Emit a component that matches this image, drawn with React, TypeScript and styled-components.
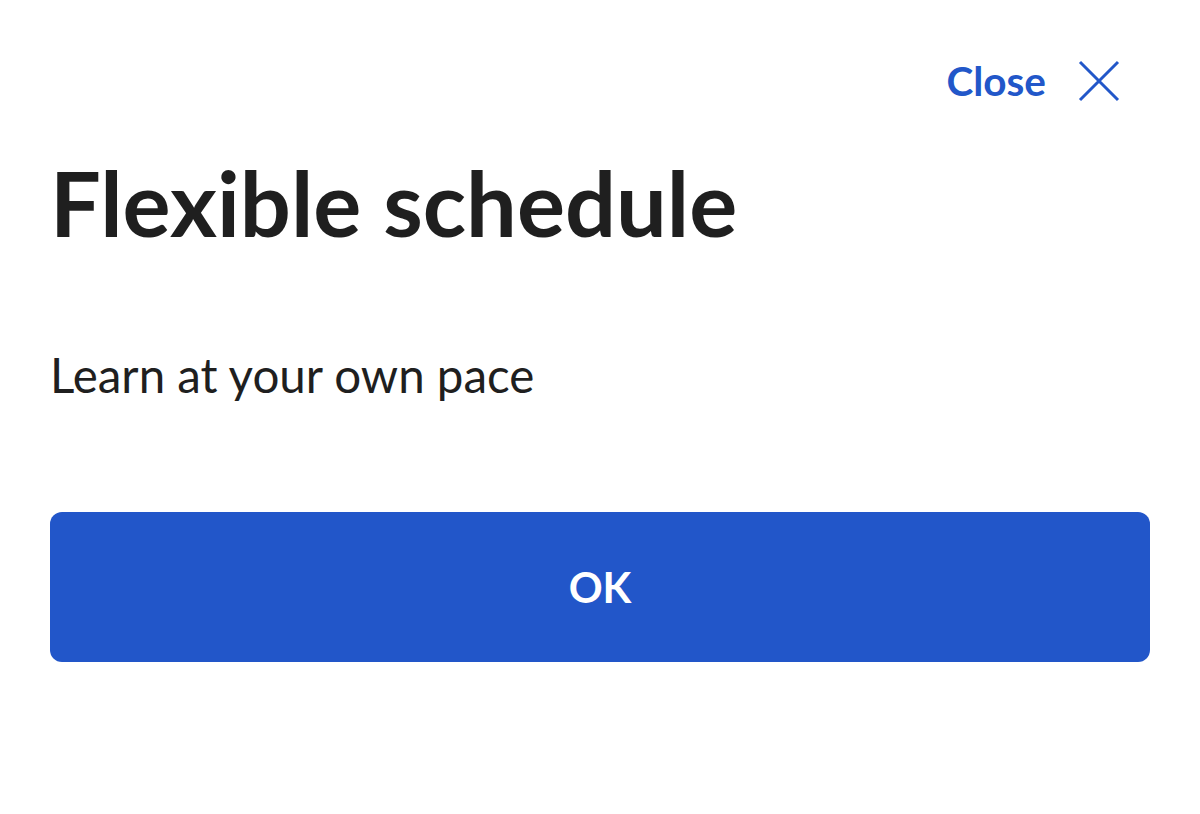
import styled, { createGlobalStyle } from "styled-components";

const Global = createGlobalStyle`
  html, body {
    margin: 0;
    padding: 0;
    background: #ffffff;
  }
  body {
    font-family: Lato, "Noto Sans", sans-serif;
  }
`;

const Sheet = styled.div`
  width: 1200px;
  height: 814px;
  box-sizing: border-box;
  padding: 50px 50px 0 50px;
  display: flex;
  flex-direction: column;
`;

const TopBar = styled.div`
  display: flex;
  justify-content: flex-end;
  padding-right: 30px;
`;

const CloseButton = styled.button`
  display: flex;
  align-items: center;
  gap: 32px;
  border: none;
  background: none;
  padding: 0;
  color: #2257c9;
  font-family: Lato, "Noto Sans", sans-serif;
  font-weight: 700;
  font-size: 40.5px;
  line-height: 62px;
  cursor: pointer;
`;

const Title = styled.h1`
  margin: 35px 0 0 0;
  font-size: 90px;
  line-height: 110px;
  font-weight: 700;
  color: #1f1f1f;
`;

const Subtitle = styled.p`
  margin: 88px 0 0 0;
  font-size: 47.5px;
  line-height: 60px;
  font-weight: 400;
  color: #1f1f1f;
`;

const OkButton = styled.button`
  margin-top: 107px;
  height: 150px;
  width: 100%;
  border: none;
  border-radius: 12px;
  background: #2256c9;
  color: #ffffff;
  font-family: Lato, "Noto Sans", sans-serif;
  font-size: 42px;
  font-weight: 700;
  cursor: pointer;
`;

const CrossIcon = () => (
  <svg width="42" height="42" viewBox="0 0 42 42" fill="none">
    <path d="M2 2 L40 40 M40 2 L2 40" stroke="#2257c9" strokeWidth="3" />
  </svg>
);

export default function App() {
  return (
    <>
      <Global />
      <Sheet>
        <TopBar>
          <CloseButton>
            Close
            <CrossIcon />
          </CloseButton>
        </TopBar>
        <Title>Flexible schedule</Title>
        <Subtitle>Learn at your own pace</Subtitle>
        <OkButton>OK</OkButton>
      </Sheet>
    </>
  );
}
